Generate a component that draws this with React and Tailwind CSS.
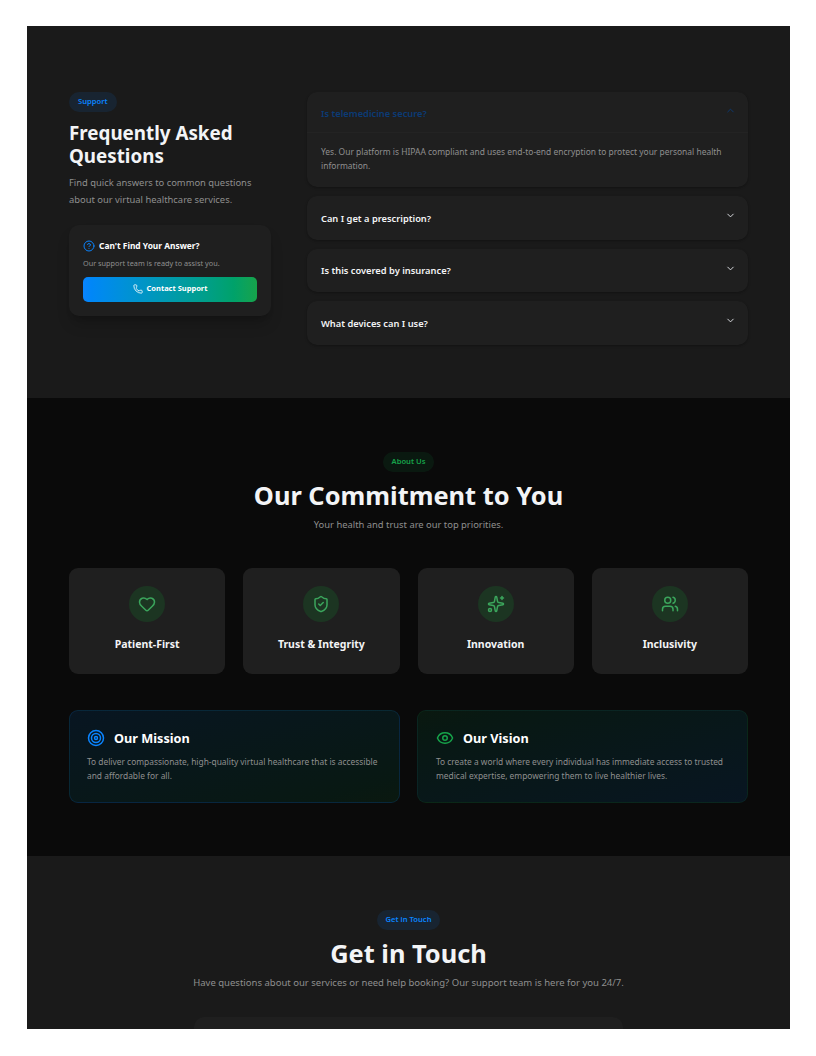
import { ChevronDown, ChevronUp, CircleHelp, Eye, Heart, Phone, ShieldCheck, Sparkles, Target, Users } from 'lucide-react'

const values = [
  { icon: Heart, label: 'Patient-First' },
  { icon: ShieldCheck, label: 'Trust & Integrity' },
  { icon: Sparkles, label: 'Innovation' },
  { icon: Users, label: 'Inclusivity' },
]

const questions = ['Can I get a prescription?', 'Is this covered by insurance?', 'What devices can I use?']

function Pill({ children, className }) {
  return <span className={`flex h-5 w-fit items-center rounded-full px-[9px] text-[7.6px] font-semibold ${className}`}>{children}</span>
}

function Heading({ pill, pillClass, title, text, textClass }) {
  return (
    <div className="flex flex-col items-center">
      <Pill className={pillClass}>{pill}</Pill>
      <h2 className="mt-[5px] text-[25.4px] leading-[36px] font-bold text-[#f3f4f6]">{title}</h2>
      <p className={`mt-[4px] leading-[16px] text-[#8f8f8f] ${textClass}`}>{text}</p>
    </div>
  )
}

export default function App() {
  return (
    <div className="h-[1056px] bg-white pt-[26px] pr-[26px] pb-[27px] pl-[27px] font-['Noto_Sans',sans-serif]">
      <div className="h-[1003px] overflow-hidden">
        {/* FAQ */}
        <section className="flex h-[372px] gap-[36px] bg-[#1a1a1a] px-[42px] pt-[66px]">
          <div className="w-[202px] shrink-0">
            <Pill className="bg-[#0a84ff]/10 text-[#0a84ff]">Support</Pill>
            <h2 className="mt-[10px] text-[18.8px] leading-[23px] font-bold text-[#f3f4f6]">Frequently Asked Questions</h2>
            <p className="mt-[7px] text-[9.4px] leading-[16.5px] text-[#8f8f8f]">Find quick answers to common questions about our virtual healthcare services.</p>
            <div className="mt-[16.6px] h-[91px] rounded-[10px] bg-[#1f1f1f] p-[14px] shadow-lg shadow-black/20">
              <div className="flex items-center gap-[4px]">
                <CircleHelp size={12} className="text-[#0a84ff]" />
                <span className="text-[8.4px] leading-[14px] font-bold text-white">Can't Find Your Answer?</span>
              </div>
              <p className="mt-[4px] text-[7.3px] leading-[12px] text-[#8f8f8f]">Our support team is ready to assist you.</p>
              <button className="mt-[8px] flex h-[25px] w-full items-center justify-center gap-[4px] rounded-[5px] bg-gradient-to-r from-[#0a84ff] to-[#16a34a] text-[7.5px] font-bold text-white">
                <Phone size={10} />
                Contact Support
              </button>
            </div>
          </div>

          <div className="flex min-w-0 flex-1 flex-col gap-[8.8px]">
            <div className="h-[95.3px] rounded-[10px] bg-[#1f1f1f] shadow-sm shadow-black/20">
              <div className="flex h-[41px] items-center justify-between border-b border-[#232323] pr-[12px] pl-[14px]">
                <span className="mt-[3px] text-[9.3px] font-semibold text-[#0b3b76]">Is telemedicine secure?</span>
                <ChevronUp size={11} className="mb-[4px] text-[#0b3b76]" />
              </div>
              <p className="px-[14px] pt-[12px] text-[8.45px] leading-[14px] text-[#8f8f8f]">Yes. Our platform is HIPAA compliant and uses end-to-end encryption to protect your personal health information.</p>
            </div>
            {questions.map(q => (
              <div key={q} className="flex h-[43.7px] items-center justify-between rounded-[10px] bg-[#1f1f1f] pr-[12px] pl-[14px] shadow-sm shadow-black/20">
                <span className="mt-[2px] text-[9.3px] font-semibold text-[#f3f4f6]">{q}</span>
                <ChevronDown size={11} className="mb-[4px] text-[#e5e7eb]" />
              </div>
            ))}
          </div>
        </section>

        {/* About */}
        <section className="h-[458px] bg-[#0a0a0a] px-[42px] pt-[54px]">
          <Heading pill="About Us" pillClass="bg-[#16a34a]/10 text-[#16a34a]" title="Our Commitment to You" text="Your health and trust are our top priorities." textClass="text-[9.4px]" />
          <div className="mt-[35px] grid grid-cols-4 gap-[18px]">
            {values.map(({ icon: Icon, label }) => (
              <div key={label} className="flex h-[106px] flex-col items-center rounded-[9px] bg-[#1f1f1f] pt-[18px]">
                <div className="flex h-[36px] w-[36px] items-center justify-center rounded-full bg-[#1c3522]">
                  <Icon size={18} className="text-[#3ba55c]" />
                </div>
                <span className="mt-[14px] text-[10.5px] leading-[16px] font-bold text-[#f3f4f6]">{label}</span>
              </div>
            ))}
          </div>
          <div className="mt-[36px] grid grid-cols-2 gap-[17px]">
            <div className="h-[93px] rounded-[9px] border border-[#0a84ff]/15 bg-gradient-to-br from-[#0a84ff]/10 to-[#16a34a]/10 px-[17px] pt-[17px]">
              <div className="flex items-center gap-[9px]">
                <Target size={18} className="text-[#0a84ff]" />
                <h3 className="text-[12.7px] leading-[20px] font-bold text-white">Our Mission</h3>
              </div>
              <p className="mt-[7px] text-[8.4px] leading-[14px] text-[#8f8f8f]">To deliver compassionate, high-quality virtual healthcare that is accessible and affordable for all.</p>
            </div>
            <div className="h-[93px] rounded-[9px] border border-[#16a34a]/10 bg-gradient-to-br from-[#16a34a]/10 to-[#0a84ff]/10 pt-[17px] pr-[17px] pl-[18px]">
              <div className="flex items-center gap-[9px]">
                <Eye size={18} className="text-[#16a34a]" />
                <h3 className="text-[12.7px] leading-[20px] font-bold text-white">Our Vision</h3>
              </div>
              <p className="mt-[7px] text-[8.4px] leading-[14px] text-[#8f8f8f]">To create a world where every individual has immediate access to trusted medical expertise, empowering them to live healthier lives.</p>
            </div>
          </div>
        </section>

        {/* Contact */}
        <section className="h-[173px] bg-[#1a1a1a] px-[42px] pt-[54px]">
          <Heading pill="Get in Touch" pillClass="bg-[#0a84ff]/10 text-[#0a84ff]" title="Get in Touch" text="Have questions about our services or need help booking? Our support team is here for you 24/7." textClass="text-[9.53px]" />
          <div className="mx-auto mt-[26px] h-[60px] w-[429px] rounded-[10px] bg-[#1f1f1f]" />
        </section>
      </div>
    </div>
  )
}
